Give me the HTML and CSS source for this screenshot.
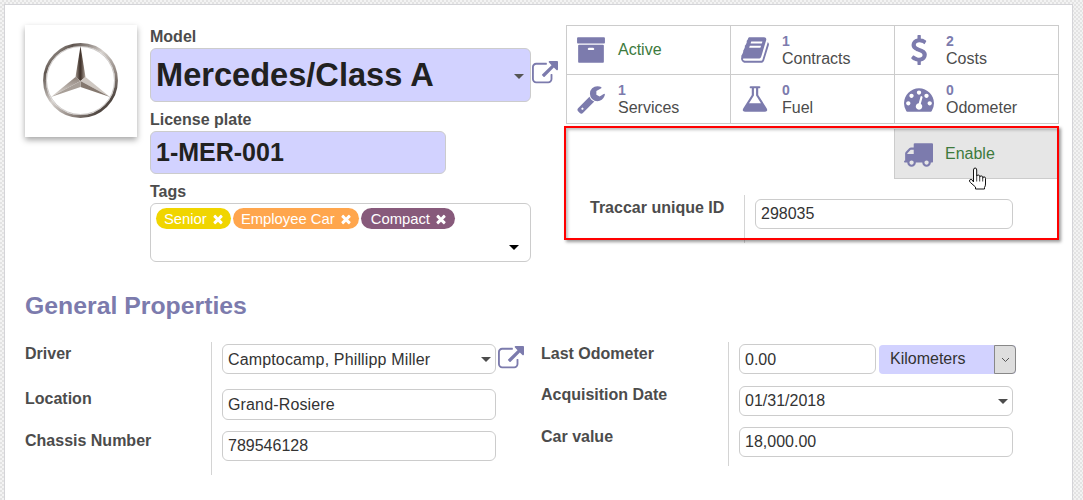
FILE: index.html
```html
<!DOCTYPE html>
<html lang="en">

<head>
  <meta charset="UTF-8">
  <meta name="viewport" content="width=device-width, initial-scale=1.0">
  <link rel="stylesheet" href="styles.css">
  <title>Mercedes/Class A</title>
</head>

<body>
  <svg class="icon-defs" width="0" height="0">
    <defs>
      <symbol id="i-link" viewBox="0 0 1792 1792"><path d="M1408 928v320q0 119-84.500 203.500t-203.500 84.500h-832q-119 0-203.500-84.500t-84.500-203.500v-832q0-119 84.500-203.500t203.500-84.500h704q14 0 23 9t9 23v64q0 14-9 23t-23 9h-704q-66 0-113 47t-47 113v832q0 66 47 113t113 47h832q66 0 113-47t47-113v-320q0-14 9-23t23-9h64q14 0 23 9t9 23zm384-864v512q0 26-19 45t-45 19-45-19l-176-176-652 652q-10 10-23 10t-23-10l-114-114q-10-10-10-23t10-23l652-652-176-176q-19-19-19-45t19-45 45-19h512q26 0 45 19t19 45z"/></symbol>
      <symbol id="i-times" viewBox="0 0 1792 1792"><path d="M1490 1322q0 40-28 68l-136 136q-28 28-68 28t-68-28l-294-294-294 294q-28 28-68 28t-68-28l-136-136q-28-28-28-68t28-68l294-294-294-294q-28-28-28-68t28-68l136-136q28-28 68-28t68 28l294 294 294-294q28-28 68-28t68 28l136 136q28 28 28 68t-28 68l-294 294 294 294q28 28 28 68z"/></symbol>
    </defs>
  </svg>

  <div class="sheet">
    <div class="header">
      <div class="avatar">
        <svg width="112" height="112" viewBox="0 0 112 112">
          <defs>
            <linearGradient id="ring" x1="0" y1="0" x2="1" y2="1">
              <stop offset="0" stop-color="#d8d4d0"/>
              <stop offset="0.2" stop-color="#5f554f"/>
              <stop offset="0.45" stop-color="#d5d0cc"/>
              <stop offset="0.7" stop-color="#8b817b"/>
              <stop offset="0.85" stop-color="#4e4540"/>
              <stop offset="1" stop-color="#a9a29d"/>
            </linearGradient>
            <linearGradient id="blade" x1="0" y1="0" x2="1" y2="0">
              <stop offset="0" stop-color="#a2978e"/>
              <stop offset="0.45" stop-color="#3f322b"/>
              <stop offset="0.55" stop-color="#4a3b33"/>
              <stop offset="1" stop-color="#b0a59c"/>
            </linearGradient>
            <linearGradient id="lower" x1="0" y1="0" x2="0" y2="1">
              <stop offset="0" stop-color="#8c8078"/>
              <stop offset="1" stop-color="#e2ddd8"/>
            </linearGradient>
          </defs>
          <circle cx="55.500" cy="55.500" r="36" fill="none" stroke="url(#ring)" stroke-width="2.800"/>
          <circle cx="55.500" cy="55.500" r="34" fill="none" stroke="#6d635d" stroke-width=".6" opacity=".6"/>
          <polygon points="55.500,21 60.500,52 55.500,56 50.500,52" fill="url(#blade)"/>
          <polygon points="55.500,56 60.500,52 85,72" fill="#cfc8c2"/>
          <polygon points="55.500,56 55.500,62 85,72" fill="#85786f"/>
          <polygon points="55.500,56 50.500,52 26,72" fill="url(#lower)"/>
          <polygon points="55.500,56 55.500,62 26,72" fill="#a89f98"/>
        </svg>
      </div>

      <div class="title">
        <div class="title-label">Model</div>
        <div class="title-row">
          <div class="input required model">
            <span>Mercedes/Class A</span>
            <i class="caret caret-grey"></i>
          </div>
          <svg class="open-link"><use href="#i-link"/></svg>
        </div>
        <div class="title-label plate-label">License plate</div>
        <div class="input required plate">1-MER-001</div>
        <div class="title-label tags-label">Tags</div>
        <div class="tags-box">
          <div class="tags">
            <span class="tag tag-yellow">Senior <svg><use href="#i-times"/></svg></span>
            <span class="tag tag-orange">Employee Car <svg><use href="#i-times"/></svg></span>
            <span class="tag tag-purple">Compact <svg><use href="#i-times"/></svg></span>
          </div>
          <i class="caret caret-black"></i>
        </div>
      </div>

      <div class="side">
        <div class="stats">
          <div class="stat">
            <svg class="stat-icon" viewBox="0 0 1792 1792"><path d="M1088 832q0-26-19-45t-45-19h-256q-26 0-45 19t-19 45 19 45 45 19h256q26 0 45-19t19-45zm576-192v960q0 26-19 45t-45 19h-1408q-26 0-45-19t-19-45v-960q0-26 19-45t45-19h1408q26 0 45 19t19 45zm64-448v256q0 26-19 45t-45 19h-1536q-26 0-45-19t-19-45v-256q0-26 19-45t45-19h1536q26 0 45 19t19 45z"/></svg>
            <div class="stat-green">Active</div>
          </div>
          <div class="stat">
            <svg class="stat-icon" viewBox="0 0 1792 1792"><path d="M1703 478q40 57 18 129l-275 906q-19 64-76.500 107.500t-122.500 43.500h-923q-77 0-148.500-53.500t-99.500-131.500q-24-67-2-127 0-4 3-27t4-37q1-8-3-21.500t-3-19.500q2-11 8-21t16.500-23.500 16.500-23.500q23-38 45-91.500t30-91.500q3-10 .5-30t-.5-28q3-11 17-28t17-23q21-36 42-92t25-90q1-9-2.500-32t.5-28q4-13 22-30.500t22-22.500q19-26 42.500-84.500t27.500-96.500q1-8-3-25.500t-2-26.500q2-8 9-18t18-23 17-21q8-12 16.500-30.500t15-35 16-36 19.500-32 26.500-23.500 36-11.500 47.500 5.500l-1 3q38-9 51-9h761q74 0 114 56t18 130l-274 906q-36 119-71.500 153.500t-128.500 34.500h-869q-27 0-38 15-11 16-1 43 24 70 144 70h923q29 0 56-15.500t35-41.500l300-987q7-22 5-57 38 15 59 43zm-1064 2q-4 13 2 22.500t20 9.500h608q13 0 25.500-9.500t16.500-22.500l21-64q4-13-2-22.500t-20-9.500h-608q-13 0-25.500 9.500t-16.500 22.500zm-83 256q-4 13 2 22.500t20 9.500h608q13 0 25.500-9.500t16.500-22.500l21-64q4-13-2-22.500t-20-9.500h-608q-13 0-25.500 9.500t-16.500 22.500z"/></svg>
            <div><b>1</b><br>Contracts</div>
          </div>
          <div class="stat">
            <svg class="stat-icon" viewBox="0 0 1792 1792"><path d="M1362 1185q0 153-99.500 263.500t-258.500 136.500v175q0 14-9 23t-23 9h-135q-13 0-22.500-9.500t-9.500-22.500v-175q-66-9-127.500-31t-101.500-44.500-74-48-46.500-37.500-17.500-18q-17-21-2-41l103-135q7-10 23-12 15-2 24 9l2 2q113 99 243 125 37 8 74 8 81 0 142.500-43t61.500-122q0-28-15-53t-33.500-42-58.500-37.500-66-32-80-32.500q-39-16-61.500-25t-61.500-26.500-62.500-31-56.500-35.500-53.500-42.500-43.500-49-35.500-58-21-66.500-8.500-78q0-138 98-242t255-134v-180q0-13 9.500-22.500t22.500-9.500h135q14 0 23 9t9 23v176q57 6 110.500 23t87 33.500 63.500 37.500 39 29 15 14q17 18 5 38l-81 146q-8 15-23 16-14 3-27-7-3-3-14.500-12t-39-26.500-58.500-32-74.500-26-85.500-11.500q-95 0-155 43t-60 111q0 26 8.500 48t29.500 41.500 39.500 33 56 31 60.500 27 70 27.500q53 20 81 31.500t76 35 75.500 42.500 62 50 53 63.500 31.500 76.500 13 94z"/></svg>
            <div><b>2</b><br>Costs</div>
          </div>
          <div class="stat">
            <svg class="stat-icon" viewBox="0 0 1792 1792"><path d="M448 1472q0-26-19-45t-45-19-45 19-19 45 19 45 45 19 45-19 19-45zm644-420l-682 682q-37 37-90 37-52 0-91-37l-106-108q-38-36-38-90 0-53 38-91l681-681q39 98 114.500 173.500t173.500 114.500zm634-435q0 39-23 106-47 134-164.500 217.500t-258.500 83.500q-185 0-316.500-131.500t-131.500-316.500 131.500-316.500 316.500-131.500q58 0 121.500 16.500t107.500 46.500q16 11 16 28t-16 28l-293 169v224l193 107q5-3 79-48.500t135.500-81 70.500-35.500q15 0 23.500 10t8.500 25z"/></svg>
            <div><b>1</b><br>Services</div>
          </div>
          <div class="stat">
            <svg class="stat-icon" viewBox="0 0 1792 1792"><path d="M1591 1448q56 89 21.500 152.500t-140.500 63.500h-1152q-106 0-140.500-63.500t21.500-152.500l503-793v-399h-64q-26 0-45-19t-19-45 19-45 45-19h512q26 0 45 19t19 45-19 45-45 19h-64v399zm-779-725l-272 429h712l-272-429-20-31v-436h-128v436z"/></svg>
            <div><b>0</b><br>Fuel</div>
          </div>
          <div class="stat">
            <svg class="stat-icon" viewBox="0 0 1792 1792"><path d="M384 1152q0-53-37.500-90.500t-90.500-37.500-90.500 37.500-37.500 90.500 37.500 90.500 90.500 37.500 90.500-37.500 37.500-90.500zm192-448q0-53-37.500-90.500t-90.500-37.500-90.500 37.500-37.500 90.500 37.500 90.500 90.500 37.500 90.500-37.500 37.500-90.500zm428 481l101-382q6-26-7.500-48.500t-38.500-29.500-48 6.500-30 39.500l-101 382q-60 5-107 43.500t-63 98.500q-20 77 20 146t117 89 146-20 89-117q16-60-6-117t-72-91zm660-33q0-53-37.500-90.500t-90.500-37.500-90.500 37.500-37.500 90.500 37.500 90.500 90.500 37.500 90.500-37.500 37.500-90.500zm-640-640q0-53-37.500-90.500t-90.500-37.500-90.500 37.500-37.500 90.500 37.500 90.500 90.500 37.500 90.500-37.500 37.500-90.500zm448 192q0-53-37.500-90.500t-90.500-37.500-90.500 37.500-37.500 90.500 37.500 90.500 90.500 37.500 90.500-37.500 37.500-90.500zm320 448q0 261-141 483-19 29-54 29h-1402q-35 0-54-29-141-221-141-483 0-182 71-348t191-286 286-191 348-71 348 71 286 191 191 286 71 348z"/></svg>
            <div><b>0</b><br>Odometer</div>
          </div>
        </div>

        <div class="enable-row">
          <div class="stat stat-hover">
            <svg class="stat-icon" viewBox="0 0 1792 1792"><path d="M640 1408q0-52-38-90t-90-38-90 38-38 90 38 90 90 38 90-38 38-90zm-384-512h384v-256h-158q-13 0-22 9l-195 195q-9 9-9 22v30zm1280 512q0-52-38-90t-90-38-90 38-38 90 38 90 90 38 90-38 38-90zm256-1088v1024q0 15-4 26.500t-13.500 18.500-16.500 11.500-23.500 6-22.500 2-25.500 0-22.500-.5q0 106-75 181t-181 75-181-75-75-181h-384q0 106-75 181t-181 75-181-75-75-181h-64q-3 0-22.500.5t-25.500 0-22.500-2-23.500-6-16.500-11.500-13.500-18.500-4-26.500q0-26 19-45t45-19v-320q0-8-.5-35t0-38 2.500-34.500 6.500-37 14-30.500 22.500-30l198-198q19-19 50.500-32t58.500-13h160v-192q0-26 19-45t45-19h1024q26 0 45 19t19 45z"/></svg>
            <div class="stat-green">Enable</div>
          </div>
        </div>

        <div class="traccar">
          <div class="row-label traccar-label">Traccar unique ID</div>
          <div class="traccar-field">
            <div class="input">298035</div>
          </div>
        </div>

        <div class="red-box"></div>
        <svg class="hand" width="20" height="24" viewBox="0 0 20 24">
          <path d="M5.500 15V3q0-2 1.600-2t1.600 2v6.500q0-1.500 1.500-1.500t1.500 1.500v.8q0-1.400 1.500-1.400t1.500 1.400v.9q0-1.300 1.400-1.300t1.400 1.500v5.600q0 2-1 3.500V22H7.500v-2L2.400 15.500q-1.600-1.600-.6-2.600 1-1 2.400 0z" fill="#fff" stroke="#111" stroke-width="1"/>
          <path d="M8.700 10v4.500M11.700 10.300v4.200M14.700 11v3.500" fill="none" stroke="#111" stroke-width=".8"/>
        </svg>
      </div>
    </div>

    <h2 class="section-title">General Properties</h2>

    <div class="groups">
      <div class="group group-left">
        <div class="labels">
          <div class="row-label label-driver">Driver</div>
          <div class="row-label label-location">Location</div>
          <div class="row-label label-chassis">Chassis Number</div>
        </div>
        <div class="fields">
          <div class="with-link">
            <div class="input select-input text-wide first-input">
              <span>Camptocamp, Phillipp Miller</span>
              <i class="caret caret-dark"></i>
            </div>
            <svg class="open-link small"><use href="#i-link"/></svg>
          </div>
          <div class="input wide location-input text-wide">Grand-Rosiere</div>
          <div class="input wide chassis-input">789546128</div>
        </div>
      </div>

      <div class="group group-right">
        <div class="labels">
          <div class="row-label label-driver">Last Odometer</div>
          <div class="row-label label-date">Acquisition Date</div>
          <div class="row-label label-value">Car value</div>
        </div>
        <div class="fields">
          <div class="odometer">
            <div class="input odo-input first-input">0.00</div>
            <div class="unit-select">
              <span>Kilometers</span>
              <span class="unit-arrow">
                <svg width="9" height="6" viewBox="0 0 9 6"><path d="M1 1l3.500 3.500L8 1" fill="none" stroke="#555" stroke-width="1"/></svg>
              </span>
            </div>
          </div>
          <div class="input select-input date-input">
            <span>01/31/2018</span>
            <i class="caret caret-dark"></i>
          </div>
          <div class="input date-input value-input">18,000.00</div>
        </div>
      </div>
    </div>
  </div>
</body>

</html>
```

FILE: styles.css
```css
* {
  box-sizing: border-box;
}

html, body {
  height: 500px;
  overflow: hidden;
}

body {
  margin: 0;
  padding: 4px 10px 0 4px;
  font-family: 'Liberation Sans', Arial, sans-serif;
  font-size: 16px;
  color: #4c4c4c;
  background-color: #f3f3f3;
  background-image: linear-gradient(45deg, #e3e3e3 25%, transparent 25%, transparent 75%, #e3e3e3 75%), linear-gradient(45deg, #e3e3e3 25%, transparent 25%, transparent 75%, #e3e3e3 75%);
  background-size: 4px 4px;
  background-position: 0 0, 2px 2px;
}

.icon-defs {
  position: absolute;
}

.sheet {
  height: 520px;
  padding: 20px 0 0 20px;
  background: #fff;
  border: 1px solid #d4d4d8;
  border-bottom: 0;
}

/* top part */
.header {
  display: flex;
  height: 244px;
}

.avatar {
  width: 112px;
  height: 112px;
  margin-right: 13px;
  background: #fff;
  box-shadow: 0 3px 6px rgba(0, 0, 0, 0.35);
  flex: none;
}

.title {
  width: 381px;
  flex: none;
  padding-top: 3px;
}

.title-label {
  height: 20px;
  font-weight: bold;
  line-height: 18px;
}

.title-row {
  position: relative;
}

.input {
  display: flex;
  align-items: center;
  justify-content: space-between;
  height: 30px;
  padding: 0 6px 0 5px;
  border: 1px solid #ccc;
  border-radius: 6px;
  color: #333;
  background: #fff;
}

.required {
  background: #d2d2ff;
}

.model {
  height: 54px;
  font-size: 32.600px;
  font-weight: bold;
  color: #212121;
}

.plate-label {
  margin-top: 9px;
}

.plate {
  width: 296px;
  height: 43px;
  font-size: 25px;
  font-weight: bold;
  color: #212121;
}

.tags-label {
  margin-top: 9px;
}

.tags-box {
  display: flex;
  flex-direction: column;
  justify-content: space-between;
  height: 59px;
  padding: 4px 11px 11px 5px;
  border: 1px solid #ccc;
  border-radius: 6px;
}

.tags {
  display: flex;
  gap: 2px;
}

.tag {
  display: flex;
  align-items: center;
  height: 21px;
  padding: 0 6px 0 8px;
  border-radius: 11px;
  font-size: 14.800px;
  color: #fff;
  white-space: pre;
}

.tag svg {
  width: 14px;
  height: 14px;
  fill: #fff;
}

.tag-yellow {
  background: #f0d500;
}

.tag-orange {
  background: #ffa64d;
}

.tag-purple {
  padding: 0 7px 0 10px;
  background: #875a7b;
}

.caret {
  display: block;
  width: 0;
  height: 0;
  border-left: 5px solid transparent;
  border-right: 5px solid transparent;
  border-top: 5px solid #555;
}

.caret-grey {
  margin-top: 3px;
}

.caret-black {
  align-self: flex-end;
  border-top-color: #000;
}

.caret-dark {
  border-top-color: #4c4c4c;
}

.open-link {
  position: absolute;
  left: 382px;
  top: 13px;
  width: 26px;
  height: 26px;
  fill: #7c7bad;
}

/* buttons + traccar */
.side {
  position: relative;
  width: 493px;
  margin-left: 35px;
  flex: none;
}

.stats {
  display: grid;
  grid-template-columns: 164px 164px 1fr;
  border-top: 1px solid #ccc;
  border-left: 1px solid #ccc;
}

.stat {
  display: flex;
  align-items: center;
  gap: 12px;
  height: 49px;
  padding-left: 9px;
  border-right: 1px solid #ccc;
  border-bottom: 1px solid #ccc;
  line-height: 18px;
}

.stat b {
  font-size: 14px;
  color: #7c7bad;
}

.stat-icon {
  width: 30px;
  height: 30px;
  fill: #7c7bad;
  flex: none;
}

.stat-green {
  color: #3d7a3d;
}

.enable-row {
  display: flex;
  justify-content: flex-end;
  margin-top: 5px;
}

.stat-hover {
  width: 165px;
  height: 50px;
  padding-left: 8px;
  background: #e6e6e6;
  border-left: 1px solid #ccc;
  border-right: 0;
}

.traccar {
  display: flex;
  margin-top: 16px;
  height: 48px;
}

.traccar-label {
  width: 178px;
  padding: 4px 0 0 24px;
}

.traccar-field {
  width: 269px;
  padding: 4px 0 0 10px;
  border-left: 1px solid #d4d4d4;
}

.red-box {
  position: absolute;
  left: -2px;
  top: 101px;
  width: 495px;
  height: 114px;
  border: 2px solid #f00;
  box-shadow: 2px 2px 3px rgba(0, 0, 0, 0.4), inset 2px 2px 3px rgba(0, 0, 0, 0.25);
  pointer-events: none;
}

.hand {
  position: absolute;
  left: 402px;
  top: 142px;
}

/* general properties */
.section-title {
  margin: 19px 0 0;
  height: 54px;
  font-size: 24.800px;
  line-height: 36px;
  color: #7c7bad;
}

.row-label {
  font-weight: bold;
  line-height: 18px;
}

.groups {
  display: flex;
}

.group {
  display: flex;
}

.group-left {
  width: 516px;
}

.labels {
  padding-top: 3px;
}

.group-left .labels {
  width: 186px;
}

.group-right .labels {
  width: 187px;
}

.label-location {
  margin-top: 27px;
}

.label-chassis {
  margin-top: 24px;
}

.label-date {
  margin-top: 23px;
}

.label-value {
  margin-top: 24px;
}

.fields {
  padding-left: 10px;
  border-left: 1px solid #d4d4d4;
}

.group-left .fields {
  height: 133px;
  padding-top: 2px;
}

.group-right .fields {
  height: 124px;
  padding-top: 2px;
}

.with-link {
  display: flex;
  align-items: center;
  width: 274px;
  position: relative;
}

.select-input {
  width: 274px;
  flex: none;
  padding-right: 4px;
}

.first-input {
  padding-top: 1px;
}

.text-wide {
  letter-spacing: 0.15px;
}

.open-link.small {
  left: 276px;
  top: 2px;
}

.wide {
  width: 274px;
}

.location-input {
  margin-top: 15px;
  height: 31px;
}

.chassis-input {
  margin-top: 11px;
}

.odometer {
  display: flex;
  gap: 3px;
}

.odo-input {
  width: 137px;
}

.unit-select {
  display: flex;
  justify-content: space-between;
  align-items: stretch;
  width: 137px;
  height: 29px;
  margin-top: 1px;
  padding-left: 11px;
  background: #d2d2ff;
  border-radius: 4px;
  line-height: 28px;
  color: #333;
}

.unit-arrow {
  display: flex;
  align-items: center;
  justify-content: center;
  width: 22px;
  background: #dedede;
  border: 1px solid #888;
  border-radius: 0 4px 4px 0;
}

.date-input {
  width: 274px;
  margin-top: 12px;
}

.value-input {
  margin-top: 11px;
}
```
